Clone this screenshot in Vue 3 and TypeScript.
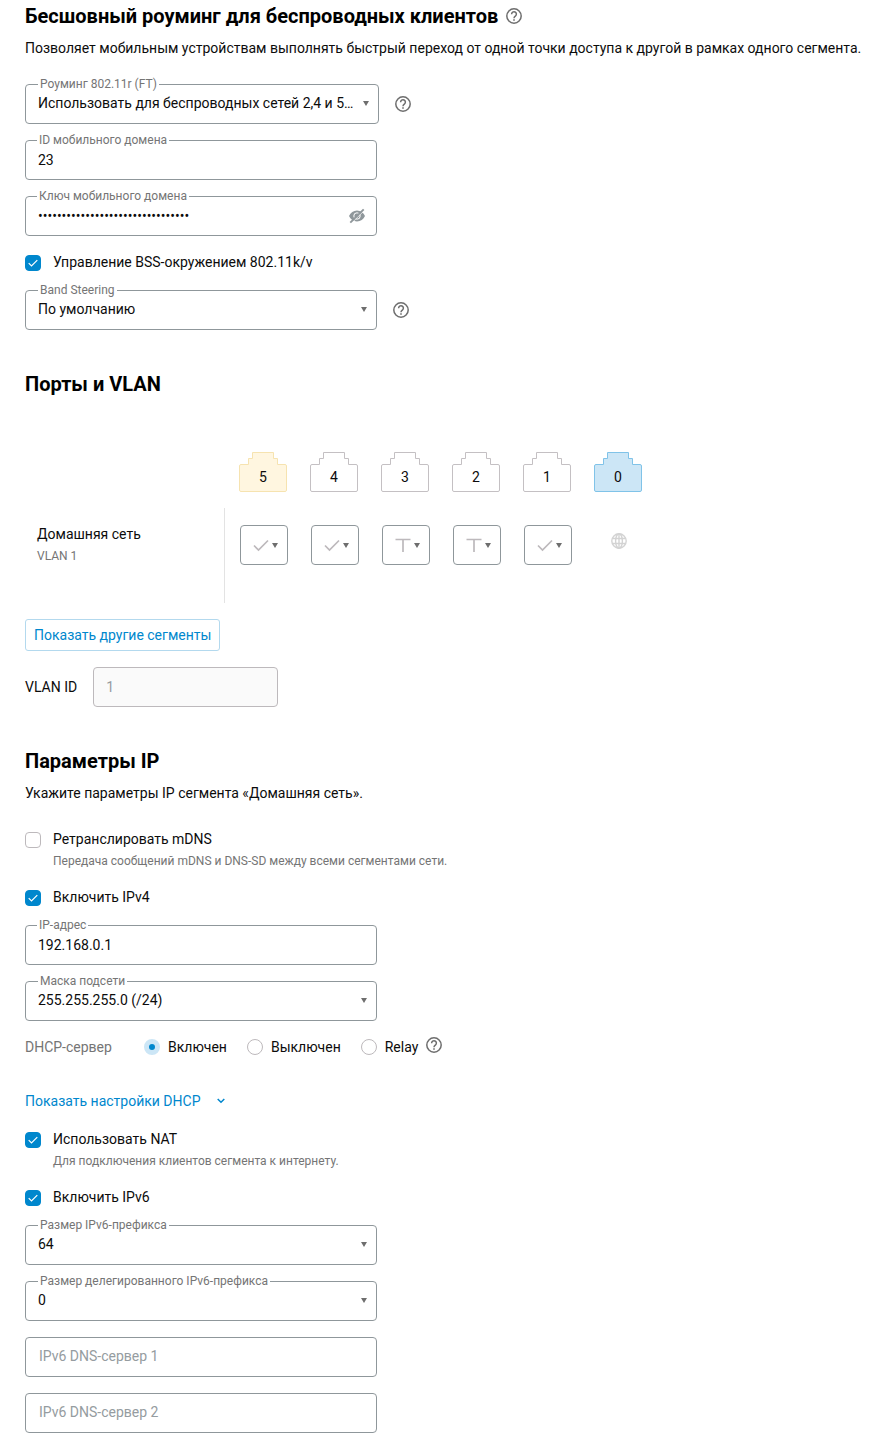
<script setup lang="ts">
import { ref } from 'vue'

type PortMode = 'access' | 'trunk'
interface Port {
  id: number
  kind: 'plain' | 'warn' | 'wan'
  mode?: PortMode
}

const roaming = ref('both')
const domainId = ref('23')
const domainKey = ref('k7Qm2xVb9LrT4wZp8sNd3fGh6jYc5aEe')
const bss = ref(true)
const steering = ref('default')
const vlanId = ref('1')
const mdns = ref(false)
const ipv4 = ref(true)
const ipAddress = ref('192.168.0.1')
const mask = ref('24')
const dhcp = ref('on')
const nat = ref(true)
const ipv6 = ref(true)
const prefix = ref('64')
const delegated = ref('0')
const dns1 = ref('')
const dns2 = ref('')

const dhcpModes = [
  { value: 'on', label: 'Включен' },
  { value: 'off', label: 'Выключен' },
  { value: 'relay', label: 'Relay' },
]

const ports = ref<Port[]>([
  { id: 5, kind: 'warn', mode: 'access' },
  { id: 4, kind: 'plain', mode: 'access' },
  { id: 3, kind: 'plain', mode: 'trunk' },
  { id: 2, kind: 'plain', mode: 'trunk' },
  { id: 1, kind: 'plain', mode: 'access' },
  { id: 0, kind: 'wan' },
])
</script>

<template>
  <svg class="defs" aria-hidden="true">
    <symbol id="i-help" viewBox="0 0 16 16">
      <circle cx="8" cy="8" r="7.2" fill="none" stroke="currentColor" stroke-width="1.5" />
      <path d="M5.600 6.300a2.400 2.400 0 1 1 3.800 1.800C8.600 8.700 8 9.100 8 10.200" fill="none" stroke="currentColor" stroke-width="1.500" />
      <path d="M7.200 11.200h1.600v1.600H7.200z" fill="currentColor" />
    </symbol>
    <symbol id="i-tick" viewBox="0 0 16 16">
      <path d="M3.700 8.200l2.800 2.800 5.800-5.800" fill="none" stroke="currentColor" stroke-width="1.2" />
    </symbol>
  </svg>

  <main class="page">
    <section>
      <h2>
        Бесшовный роуминг для беспроводных клиентов
        <button class="help" type="button" aria-label="Справка о роуминге"><svg><use href="#i-help" /></svg></button>
      </h2>
      <p class="lead">Позволяет мобильным устройствам выполнять быстрый переход от одной точки доступа к другой в рамках одного сегмента.</p>

      <div class="fields">
        <div class="line">
          <div class="field pick wide">
            <select id="roaming" v-model="roaming">
              <option value="both">Использовать для беспроводных сетей 2,4 и 5 ГГц</option>
              <option value="off">Не использовать</option>
            </select>
            <label for="roaming">Роуминг 802.11r (FT)</label>
          </div>
          <button class="help" type="button" aria-label="Справка о 802.11r"><svg><use href="#i-help" /></svg></button>
        </div>
        <div class="field">
          <input id="domain-id" v-model="domainId" type="text" />
          <label for="domain-id">ID мобильного домена</label>
        </div>
        <div class="field">
          <input id="domain-key" v-model="domainKey" type="password" />
          <label for="domain-key">Ключ мобильного домена</label>
          <button class="eye" type="button" aria-label="Показать ключ">
            <svg viewBox="0 0 16 16">
              <path d="M8 2.600C4.500 2.600 1.500 4.800 0 8c1.500 3.200 4.500 5.400 8 5.400s6.500-2.200 8-5.400c-1.500-3.200-4.500-5.400-8-5.400z" fill="currentColor" />
              <circle cx="8" cy="8" r="3.200" fill="none" stroke="#fff" stroke-width="1" />
              <path d="M2.200 15.400L15.400 2.200" fill="none" stroke="#fff" stroke-width="1" />
              <path d="M1.300 14.700L14.700 1.300" fill="none" stroke="currentColor" stroke-width="1.900" />
            </svg>
          </button>
        </div>
      </div>

      <label class="check solo">
        <span class="box"><input v-model="bss" type="checkbox" /><svg><use href="#i-tick" /></svg></span>
        <span>Управление BSS-окружением 802.11k/v</span>
      </label>

      <div class="line">
        <div class="field pick">
          <select id="steering" v-model="steering">
            <option value="default">По умолчанию</option>
            <option value="off">Выключено</option>
          </select>
          <label for="steering">Band Steering</label>
        </div>
        <button class="help" type="button" aria-label="Справка о Band Steering"><svg><use href="#i-help" /></svg></button>
      </div>
    </section>

    <section class="vlan">
      <h2>Порты и VLAN</h2>
      <table>
        <thead>
          <tr>
            <td class="segment"></td>
            <th v-for="p in ports" :key="p.id" scope="col">
              <div class="port" :class="p.kind">
                <svg viewBox="0 0 48 40" aria-hidden="true">
                  <path d="M13.500 .5H34.500V6.500H38.500V12.500H46a1.500 1.500 0 0 1 1.500 1.500V38a1.500 1.500 0 0 1-1.500 1.500H2a1.500 1.500 0 0 1-1.500-1.500V14a1.500 1.500 0 0 1 1.500-1.500H9.500V6.500H13.500Z" />
                </svg>
                <span>{{ p.id }}</span>
              </div>
            </th>
          </tr>
        </thead>
        <tbody>
          <tr>
            <th class="segment" scope="row">
              Домашняя сеть
              <small>VLAN 1</small>
            </th>
            <td v-for="p in ports" :key="p.id">
              <button v-if="p.mode" class="mode" type="button" :aria-label="'Режим порта ' + p.id">
                <svg viewBox="0 0 18 18">
                  <path v-if="p.mode === 'access'" d="M2 9.500l4.500 4.500L16 4.500" />
                  <path v-else d="M1.500 3.500H16.500M9 3.500V16" />
                </svg>
                <i></i>
              </button>
              <svg v-else class="globe" viewBox="0 0 16 16" role="img" aria-label="Интернет">
                <circle cx="8" cy="8" r="7.200" />
                <ellipse cx="8" cy="8" rx="3.400" ry="7.200" />
                <path d="M1.500 5.500H14.500M1.500 10.500H14.500M8 1V15" />
              </svg>
            </td>
          </tr>
        </tbody>
      </table>
      <button class="outline" type="button">Показать другие сегменты</button>
      <div class="vlan-id">
        <label for="vlan-id">VLAN ID</label>
        <input id="vlan-id" v-model="vlanId" type="text" disabled />
      </div>
    </section>

    <section>
      <h2>Параметры IP</h2>
      <p class="lead">Укажите параметры IP сегмента «Домашняя сеть».</p>

      <label class="check first">
        <span class="box"><input v-model="mdns" type="checkbox" /><svg><use href="#i-tick" /></svg></span>
        <span>Ретранслировать mDNS<small>Передача сообщений mDNS и DNS-SD между всеми сегментами сети.</small></span>
      </label>
      <label class="check">
        <span class="box"><input v-model="ipv4" type="checkbox" /><svg><use href="#i-tick" /></svg></span>
        <span>Включить IPv4</span>
      </label>

      <div class="fields">
        <div class="field">
          <input id="ip" v-model="ipAddress" type="text" />
          <label for="ip">IP-адрес</label>
        </div>
        <div class="field pick">
          <select id="mask" v-model="mask">
            <option value="24">255.255.255.0 (/24)</option>
            <option value="16">255.255.0.0 (/16)</option>
          </select>
          <label for="mask">Маска подсети</label>
        </div>
      </div>

      <div class="dhcp" role="radiogroup" aria-labelledby="dhcp-title">
        <span id="dhcp-title" class="caption">DHCP-сервер</span>
        <label v-for="m in dhcpModes" :key="m.value">
          <input v-model="dhcp" type="radio" name="dhcp" :value="m.value" />
          <span>{{ m.label }}</span>
        </label>
        <button class="help" type="button" aria-label="Справка о DHCP"><svg><use href="#i-help" /></svg></button>
      </div>

      <button class="expand" type="button">
        Показать настройки DHCP
        <svg viewBox="0 0 8 6" aria-hidden="true"><path d="M.7 1L4 4.300 7.300 1" /></svg>
      </button>

      <label class="check">
        <span class="box"><input v-model="nat" type="checkbox" /><svg><use href="#i-tick" /></svg></span>
        <span>Использовать NAT<small>Для подключения клиентов сегмента к интернету.</small></span>
      </label>
      <label class="check">
        <span class="box"><input v-model="ipv6" type="checkbox" /><svg><use href="#i-tick" /></svg></span>
        <span>Включить IPv6</span>
      </label>

      <div class="fields">
        <div class="field pick">
          <select id="prefix" v-model="prefix">
            <option>64</option>
            <option>56</option>
          </select>
          <label for="prefix">Размер IPv6-префикса</label>
        </div>
        <div class="field pick">
          <select id="delegated" v-model="delegated">
            <option>0</option>
            <option>60</option>
          </select>
          <label for="delegated">Размер делегированного IPv6-префикса</label>
        </div>
        <div class="field dns"><input v-model="dns1" type="text" placeholder="IPv6 DNS-сервер 1" aria-label="IPv6 DNS-сервер 1" /></div>
        <div class="field dns"><input v-model="dns2" type="text" placeholder="IPv6 DNS-сервер 2" aria-label="IPv6 DNS-сервер 2" /></div>
      </div>
    </section>
  </main>
</template>

<style>
body {
  margin: 0;
  background: #fff;
}
</style>

<style scoped>
.defs {
  display: none;
}
.page {
  padding: 4px 25px 12px;
  font: 14px/20px Roboto, sans-serif;
  color: #0c0c0c;
}
button,
input,
select {
  box-sizing: border-box;
  margin: 0;
  font: inherit;
  color: inherit;
}
button {
  padding: 0;
  border: 0;
  background: none;
  cursor: pointer;
}
section + section {
  margin-top: 42px;
}
h2 {
  display: flex;
  align-items: center;
  gap: 8px;
  margin: 0;
  font-size: 20px;
  line-height: 24px;
  font-weight: 700;
  color: #000;
}
.lead {
  margin: 10px 0 0;
}
.lead + .fields {
  margin-top: 26px;
}
.help {
  flex: none;
  width: 16px;
  height: 16px;
  color: #6e6e6e;
}
.help svg {
  display: block;
  width: 16px;
  height: 16px;
}
.fields {
  display: flex;
  flex-direction: column;
  gap: 16px;
}
.line {
  display: flex;
  align-items: center;
  gap: 16px;
}
.field {
  position: relative;
  width: 100%;
  max-width: 352px;
}
.field.wide {
  max-width: 354px;
}
.field input,
.field select {
  display: block;
  width: 100%;
  height: 40px;
  padding: 0 12px;
  border: 1px solid #8f979b;
  border-radius: 4px;
  background: #fff;
  outline: none;
}
.field select {
  padding: 0 24px 2px 12px;
  appearance: none;
  text-overflow: ellipsis;
}
.field.dns input {
  padding: 0 13px 3px;
}
.field input::placeholder {
  color: #959ca0;
  opacity: 1;
}
.field > label {
  position: absolute;
  top: -8px;
  left: 12px;
  padding: 0 2px;
  background: #fff;
  font-size: 12px;
  line-height: 16px;
  color: #757575;
}
.pick > label {
  left: 13px;
}
.pick::after {
  content: '';
  position: absolute;
  top: 17px;
  right: 10px;
  border: solid transparent;
  border-width: 5px 3px 0;
  border-top-color: #6e6e6e;
}
.eye {
  position: absolute;
  top: 12px;
  right: 12px;
  width: 16px;
  height: 16px;
  color: #8f979b;
}
.eye svg {
  display: block;
}
.check {
  display: flex;
  width: fit-content;
  gap: 12px;
  margin: 18px 0;
}
.check.solo {
  margin: 16px 0 18px;
}
.check.first {
  margin-top: 26px;
}
.check small,
.segment small {
  display: block;
  margin-top: 4px;
  font-size: 12px;
  line-height: 16px;
  font-weight: 400;
  color: #757575;
}
.box {
  display: grid;
  flex: none;
  width: 16px;
  height: 16px;
  margin-top: 3px;
}
.box > * {
  grid-area: 1 / 1;
  width: 16px;
  height: 16px;
}
.box input {
  appearance: none;
  border: 1px solid #bdb9bc;
  border-radius: 4px;
}
.box input:checked {
  border-color: #0087cd;
  background: #0087cd;
}
.box svg {
  color: #fff;
  pointer-events: none;
}
table {
  width: 626px;
  margin-top: 56px;
  table-layout: fixed;
  border-spacing: 0;
}
td,
th {
  box-sizing: border-box;
  padding: 0;
  vertical-align: top;
  font-weight: 400;
  text-align: left;
}
thead th {
  height: 56px;
  padding-left: 14px;
}
.port {
  display: grid;
  width: 48px;
  height: 40px;
}
.port > * {
  grid-area: 1 / 1;
}
.port span {
  padding-top: 15px;
  text-align: center;
}
.port path {
  fill: #fff;
  stroke: #c4c0c3;
}
.port.warn path {
  fill: #fff6e0;
  stroke: #f6e3b0;
}
.port.wan path {
  fill: #cce6f6;
  stroke: #80c3e8;
}
thead .segment {
  width: 200px;
}
tbody th,
tbody td {
  height: 95px;
}
tbody .segment {
  padding: 16px 12px;
  border-right: 1px solid #e3e3e3;
}
tbody td {
  padding: 17px 0 0 15px;
}
.mode {
  display: flex;
  align-items: center;
  justify-content: center;
  gap: 2px;
  width: 48px;
  height: 40px;
  padding-left: 2px;
  border: 1px solid #8f979b;
  border-radius: 4px;
}
.mode svg {
  width: 18px;
  height: 18px;
  fill: none;
  stroke: #bdb9bc;
  stroke-width: 1.7;
}
.mode i {
  border: solid transparent;
  border-width: 5px 3px 0;
  border-top-color: #6e6e6e;
}
.globe {
  display: block;
  width: 16px;
  height: 16px;
  margin: 8px 16px;
  fill: none;
  stroke: #d3d3d3;
  stroke-width: 1.4;
}
.outline {
  height: 32px;
  margin-top: 16px;
  padding: 0 8px;
  border: 1px solid #b3d9ee;
  border-radius: 3px;
  color: #0087cd;
}
.vlan-id {
  display: flex;
  align-items: center;
  gap: 16px;
  margin-top: 16px;
}
.vlan-id input {
  width: 185px;
  height: 40px;
  padding: 0 12px;
  border: 1px solid #bdb9bc;
  border-radius: 4px;
  background: #fafafa;
  color: #959ca0;
}
.dhcp {
  display: flex;
  align-items: center;
  gap: 20px;
  margin-top: 16px;
}
.dhcp .caption {
  width: 99px;
  color: #757575;
}
.dhcp label {
  display: flex;
  align-items: center;
  gap: 8px;
}
.dhcp input {
  appearance: none;
  width: 16px;
  height: 16px;
  border: 1px solid #bdb9bc;
  border-radius: 50%;
}
.dhcp input:checked {
  border: 5px solid #cce6f6;
  background: #0087cd;
}
.dhcp .help {
  align-self: flex-start;
  margin-left: -12px;
}
.expand {
  display: flex;
  align-items: center;
  gap: 16px;
  margin: 34px 0 18px;
  color: #0087cd;
}
.expand svg {
  width: 8px;
  height: 6px;
  fill: none;
  stroke: currentColor;
  stroke-width: 1.5;
}
</style>
